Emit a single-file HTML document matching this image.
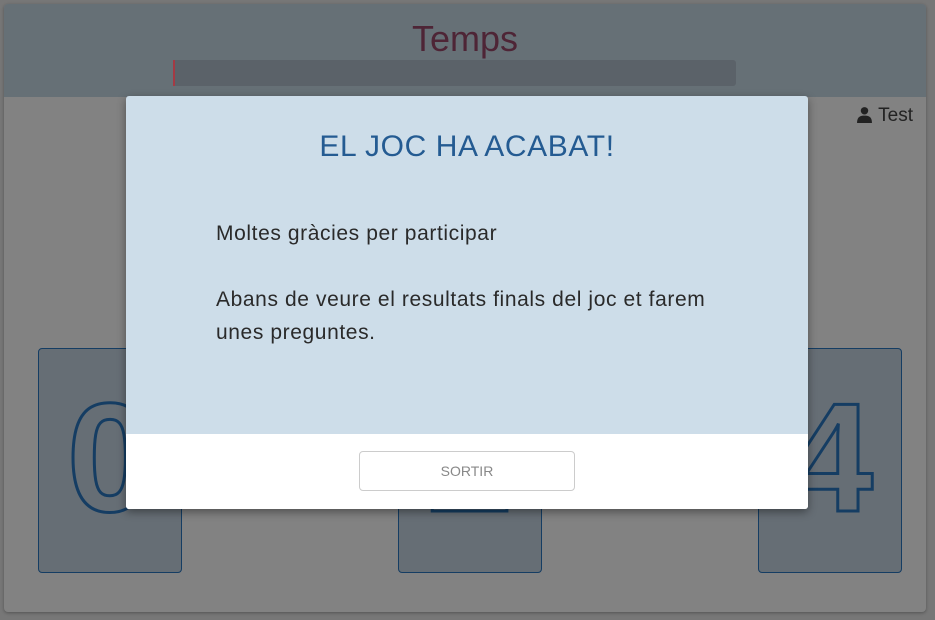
<!DOCTYPE html>
<html><head><meta charset="utf-8"><style>
body{margin:0;width:935px;height:620px;background:#777;font-family:"Liberation Sans",sans-serif;overflow:hidden;position:relative}
.card{position:absolute;left:4px;top:4px;width:922px;height:608px;background:#828282;border-radius:4px;box-shadow:0 1px 3px rgba(0,0,0,.3);overflow:hidden}
.head{position:absolute;left:0;top:0;width:922px;height:93px;background:#667076}
.title{position:absolute;left:0;width:922px;top:14px;text-align:center;font-size:36px;color:#4e2536}
.bar{position:absolute;left:169px;top:56px;width:563px;height:26px;background:#5b6269;border-radius:3px}
.bar i{position:absolute;left:0;top:0;width:2px;height:26px;background:#a43a44}
.user{position:absolute;right:13px;top:101px;font-size:19px;color:#222}
.box{position:absolute;top:344px;width:142px;height:223px;background:#666e75;border:1px solid #153d63;border-radius:4px;overflow:hidden}
.box span{position:absolute;left:0;width:142px;text-align:center;top:20px;font-size:155px;font-weight:bold;color:#666e75;-webkit-text-stroke:3px #153d63}
.modal{position:absolute;left:126px;top:96px;width:682px;height:413px;background:#cddde9;border-radius:3px;box-shadow:0 3px 9px rgba(0,0,0,.4);overflow:hidden}
.modal h1{margin:0;position:absolute;top:34px;width:100%;text-align:center;font-size:30px;letter-spacing:.6px;font-weight:normal;color:#245b92}
.txt{position:absolute;left:90px;top:121px;font-size:21px;letter-spacing:.6px;line-height:33px;color:#2a2a2a}
.foot{position:absolute;left:0;top:338px;width:682px;height:75px;background:#fff}
.btn{position:absolute;left:233px;top:17px;width:214px;height:38px;border:1px solid #ccc;border-radius:4px;text-align:center;line-height:38px;font-size:14px;color:#888}
</style></head><body>
<div class="card">
<div class="head"><div class="title">Temps</div><div class="bar"><i></i></div></div>
<div class="user"><svg width="17" height="17" viewBox="0 0 16 16" style="vertical-align:-2px"><circle cx="8" cy="4.5" r="3.5" fill="#222"/><path d="M1 16 C1 10 4 9 8 9 C12 9 15 10 15 16Z" fill="#222"/></svg> Test</div>
<div class="box" style="left:34px"><span>0</span></div>
<div class="box" style="left:394px"><span>2</span></div>
<div class="box" style="left:754px"><span>4</span></div>
</div>
<div class="modal">
<h1>EL JOC HA ACABAT!</h1>
<div class="txt">Moltes gràcies per participar<br><br>Abans de veure el resultats finals del joc et farem<br>unes preguntes.</div>
<div class="foot"><div class="btn">SORTIR</div></div>
</div>
</body></html>
